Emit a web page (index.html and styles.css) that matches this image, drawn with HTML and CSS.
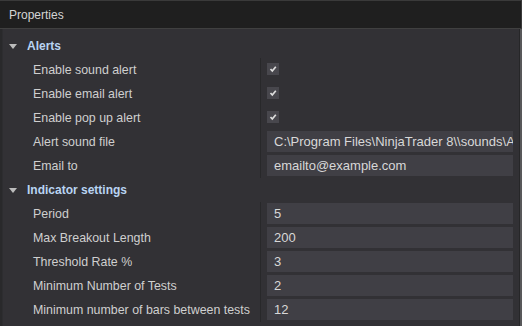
FILE: index.html
```html
<!DOCTYPE html>
<html lang="en">
<head>
    <meta charset="UTF-8">
    <meta name="viewport" content="width=device-width, initial-scale=1.0">
    <title>Properties</title>
    <link rel="stylesheet" href="styles.css">
</head>
<body>

<div class="panel">
    <div class="title">Properties</div>
    <div class="grid-wrap">
        <div class="grid">
            <div class="category"><span class="arrow"></span>Alerts</div>
            <div class="row">
                <div class="label">Enable sound alert</div>
                <div class="value"><span class="check"><svg width="12" height="12" viewBox="0 0 12 12"><polyline points="3.5,6 5.3,8 8.8,3.8" fill="none" stroke="#dedede" stroke-width="1.7"/></svg></span></div>
            </div>
            <div class="row">
                <div class="label">Enable email alert</div>
                <div class="value"><span class="check"><svg width="12" height="12" viewBox="0 0 12 12"><polyline points="3.5,6 5.3,8 8.8,3.8" fill="none" stroke="#dedede" stroke-width="1.7"/></svg></span></div>
            </div>
            <div class="row">
                <div class="label">Enable pop up alert</div>
                <div class="value"><span class="check"><svg width="12" height="12" viewBox="0 0 12 12"><polyline points="3.5,6 5.3,8 8.8,3.8" fill="none" stroke="#dedede" stroke-width="1.7"/></svg></span></div>
            </div>
            <div class="row">
                <div class="label">Alert sound file</div>
                <div class="value"><div class="field">C:\Program Files\NinjaTrader 8\\sounds\Alert1.wav</div></div>
            </div>
            <div class="row">
                <div class="label">Email to</div>
                <div class="value"><div class="field">emailto@example.com</div></div>
            </div>

            <div class="category"><span class="arrow"></span>Indicator settings</div>
            <div class="row">
                <div class="label">Period</div>
                <div class="value"><div class="field">5</div></div>
            </div>
            <div class="row">
                <div class="label">Max Breakout Length</div>
                <div class="value"><div class="field">200</div></div>
            </div>
            <div class="row">
                <div class="label">Threshold Rate %</div>
                <div class="value"><div class="field">3</div></div>
            </div>
            <div class="row">
                <div class="label">Minimum Number of Tests</div>
                <div class="value"><div class="field">2</div></div>
            </div>
            <div class="row">
                <div class="label">Minimum number of bars between tests</div>
                <div class="value"><div class="field">12</div></div>
            </div>
        </div>
        <div class="scrollbar"></div>
    </div>
</div>

</body>
</html>
```

FILE: styles.css
```css
html, body { margin: 0; padding: 0; }
body { background-color: #323135; font-family: "Liberation Sans", Arial, sans-serif; font-size: 12px; color: #cfcfcf; width: 522px; height: 326px; overflow: hidden; }
.panel { width: 522px; height: 326px; display: flex; flex-direction: column; }
.title { flex: none; height: 29px; box-sizing: border-box; border-top: 1px solid #3a3a3a; border-bottom: 1px solid #404040; border-right: 1px solid #3a3a3a; background-color: #1f1f1f; padding-left: 9px; display: flex; align-items: center; font-size: 12px; color: #d4d4d4; }
.grid-wrap { flex: 1; display: flex; min-height: 0; }
.grid { flex: 1; min-width: 0; padding-top: 5px; border-left: 2px solid #29292b; box-shadow: inset 1px 0 0 #2d2d30; }
.category { height: 24px; display: flex; align-items: center; padding-left: 7px; font-weight: bold; color: #b9d4f2; }
.arrow { width: 0; height: 0; border-left: 4px solid transparent; border-right: 4px solid transparent; border-top: 5px solid #bcbcbc; margin-right: 10px; }
.row { height: 24px; display: flex; }
.label { width: 227px; flex: none; padding-left: 31px; display: flex; align-items: center; white-space: nowrap; font-size: 12.4px; border-right: 1px solid #28282a; }
.value { flex: 1; min-width: 0; padding: 0 6px; }
.field { margin-top: 1px; height: 21px; background-color: #403f45; padding: 0 4px 0 7px; display: flex; align-items: center; font-size: 13px; color: #d8d8d8; white-space: nowrap; overflow: hidden; }
.check { display: block; width: 12px; height: 12px; margin-top: 5px; background-color: #48474d; }
.check svg { display: block; }
.scrollbar { flex: none; width: 2px; border-left: 1px solid #262628; background-color: #58585a; }
```
